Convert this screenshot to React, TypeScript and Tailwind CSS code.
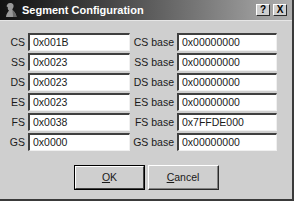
import React from "react";

const rows = [
  ["CS", "0x001B", "0x00000000"],
  ["SS", "0x0023", "0x00000000"],
  ["DS", "0x0023", "0x00000000"],
  ["ES", "0x0023", "0x00000000"],
  ["FS", "0x0038", "0x7FFDE000"],
  ["GS", "0x0000", "0x00000000"],
];

function Field({ value, width }: { value: string; width: string }) {
  return (
    <div
      className={`${width} h-[18px] bg-white border-t-[2px] border-l-[2px] border-b border-r border-t-[#404040] border-l-[#404040] border-b-[#f0f0f0] border-r-[#f0f0f0] pl-[3px] flex items-center text-[10.5px] text-[#1a1a1a] leading-none`}
    >
      {value}
    </div>
  );
}

function App() {
  return (
    <div
      className="w-[294px] h-[201px] bg-[#cfcfcf] relative overflow-hidden flex flex-col border-r-[2px] border-b-[2px] border-r-[#3a3a3a] border-b-[#3a3a3a]"
      style={{ fontFamily: '"Liberation Sans", Arial, sans-serif' }}
    >
      <div className="h-[20px] shrink-0 bg-linear-to-r from-[#121212] via-[#5a5a5a] to-[#b0b0b0] flex items-center pl-[4px] pr-[5px]">
        <svg width="14" height="16" viewBox="0 0 14 16" className="shrink-0">
          <path
            d="M6 1 C9 1 10 3 9.5 5 C9 6.5 8 7 8.5 8 C10 9.5 12 11 12.5 15 L2 15 C2 12 4 10 5 8.5 C4 8 3.5 6.5 3.8 5 C2.5 4.8 2.2 3.8 3 3.3 C3.5 1.8 4.5 1 6 1 Z"
            fill="#9a9a9a"
          />
          <path d="M8.5 8 C10 9.5 12 11 12.5 15 L9 15 C9 12 8.5 10 8.5 8 Z" fill="#6a6a6a" />
        </svg>
        <span className="ml-[4px] text-white font-bold text-[11px] leading-none">
          Segment Configuration
        </span>
        <div className="ml-auto flex gap-[3px]">
          <div className="w-[14px] h-[12px] bg-[#cfcfcf] border-t border-l border-white border-b border-r border-b-[#2a2a2a] border-r-[#2a2a2a] flex items-center justify-center text-[10px] font-bold text-black leading-none">
            ?
          </div>
          <div className="w-[14px] h-[12px] bg-[#cfcfcf] border-t border-l border-white border-b border-r border-b-[#2a2a2a] border-r-[#2a2a2a] flex items-center justify-center text-[10px] font-bold text-black leading-none">
            X
          </div>
        </div>
      </div>
      <div className="h-px bg-[#e6e6e6]" />
      <div className="flex flex-col gap-[2px] pt-[12px]">
        {rows.map(([seg, val, base]) => (
          <div key={seg} className="flex items-center">
            <div className="w-[25px] text-right text-[10.5px] text-[#1a1a1a] leading-none">{seg}</div>
            <div className="w-[3px]" />
            <Field value={val} width="w-[102px]" />
            <div className="w-[44px] text-right text-[10.5px] text-[#1a1a1a] leading-none">{seg} base</div>
            <div className="w-[3px]" />
            <Field value={base} width="w-[100px]" />
          </div>
        ))}
      </div>
      <div className="flex pl-[74px] gap-[3px] mt-[14px]">
        <div className="w-[71px] h-[25px] border border-black">
          <div className="w-full h-full border-t border-l border-white border-b border-r border-b-[#404040] border-r-[#404040] flex items-center justify-center text-[10.5px] text-[#1a1a1a] leading-none">
            <span><span className="underline">O</span>K</span>
          </div>
        </div>
        <div className="w-[71px] h-[25px] border-t border-l border-white border-b border-r border-b-[#2a2a2a] border-r-[#2a2a2a]">
          <div className="w-full h-full border-b border-r border-b-[#808080] border-r-[#808080] flex items-center justify-center text-[10.5px] text-[#1a1a1a] leading-none">
            <span><span className="underline">C</span>ancel</span>
          </div>
        </div>
      </div>
    </div>
  );
}

export default App;
